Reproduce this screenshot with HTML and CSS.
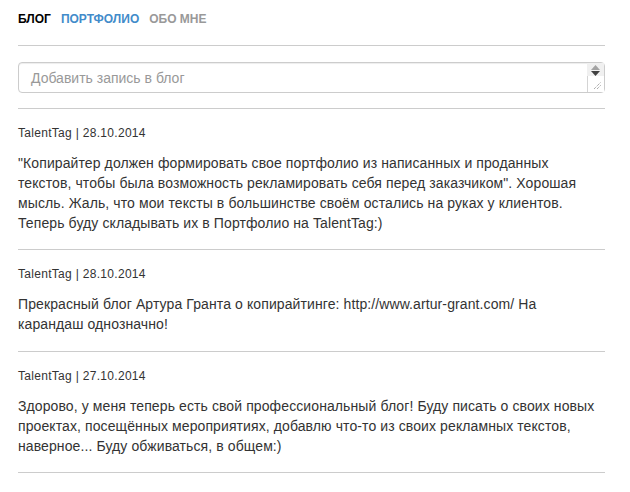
FILE: index.html
```html
<!DOCTYPE html>
<html lang="ru">
<head>
<meta charset="utf-8">
<title>Блог</title>
<link rel="stylesheet" href="styles.css">
</head>
<body>
<div class="page">
  <nav class="tabs">
    <a class="tab tab-active">БЛОГ</a>
    <a class="tab tab-link">ПОРТФОЛИО</a>
    <a class="tab tab-muted">ОБО МНЕ</a>
  </nav>
  <div class="composer">
    <div class="field">
      <span class="placeholder">Добавить запись в блог</span>
      <div class="scrollbar">
        <div class="sb-buttons">
          <svg class="arrow" width="9" height="5" viewBox="0 0 9 5"><path d="M0 5 L4.5 0 L9 5 Z" fill="#a3a3a3"/></svg>
          <svg class="arrow" width="9" height="5" viewBox="0 0 9 5"><path d="M0 0 L9 0 L4.5 5 Z" fill="#404040"/></svg>
        </div>
        <div class="sb-grip">
          <svg width="9" height="9" viewBox="0 0 9 9"><path d="M1 8 L8 1 M4 8 L8 4" stroke="#8a8a8a" stroke-width="1" stroke-dasharray="1 1" fill="none"/></svg>
        </div>
      </div>
    </div>
  </div>
  <article class="post">
    <div class="meta">TalentTag | 28.10.2014</div>
    <p class="text">"Копирайтер должен формировать свое портфолио из написанных и проданных текстов, чтобы была возможность рекламировать себя перед заказчиком". Хорошая мысль. Жаль, что мои тексты в большинстве своём остались на руках у клиентов. Теперь буду складывать их в Портфолио на TalentTag:)</p>
  </article>
  <article class="post">
    <div class="meta">TalentTag | 28.10.2014</div>
    <p class="text">Прекрасный блог Артура Гранта о копирайтинге: http://www.artur-grant.com/ На карандаш однозначно!</p>
  </article>
  <article class="post">
    <div class="meta">TalentTag | 27.10.2014</div>
    <p class="text">Здорово, у меня теперь есть свой профессиональный блог! Буду писать о своих новых проектах, посещённых мероприятиях, добавлю что-то из своих рекламных текстов, наверное... Буду обживаться, в общем:)</p>
  </article>
</div>
</body>
</html>
```
FILE: styles.css
```css
html, body {
  margin: 0;
  padding: 0;
  background: #ffffff;
}
body {
  font-family: "Liberation Sans", Arial, sans-serif;
  color: #333333;
  font-size: 14px;
}
.page {
  width: 587px;
  margin-left: 18px;
}
.tabs {
  display: flex;
  gap: 10px;
  padding: 11px 0 17px;
  border-bottom: 1px solid #cccccc;
}
.tab {
  font-size: 12px;
  font-weight: bold;
  line-height: 17px;
  text-decoration: none;
}
.tab-active { color: #000000; }
.tab-link { color: #428bca; }
.tab-muted { color: #999999; }
.composer {
  padding: 16px 0 15px;
  border-bottom: 1px solid #cccccc;
}
.field {
  position: relative;
  height: 29px;
  border: 1px solid #cccccc;
  border-radius: 4px;
  display: flex;
  align-items: center;
  padding-left: 12px;
  box-shadow: inset 0 1px 1px rgba(0,0,0,0.075);
}
.placeholder {
  color: #999999;
  font-size: 14px;
  line-height: 20px;
}
.scrollbar {
  position: absolute;
  top: 0;
  right: 0;
  bottom: 0;
  width: 17px;
  display: flex;
  flex-direction: column;
}
.sb-buttons {
  height: 12px;
  background: #f0f0f0;
  display: flex;
  flex-direction: column;
  align-items: center;
  justify-content: center;
  gap: 1px;
  padding-top: 1px;
}
.arrow { display: block; }
.sb-grip {
  flex: 1;
  border-left: 1px solid #d4d4d4;
  background: #ffffff;
  display: flex;
  align-items: flex-end;
  justify-content: flex-end;
  padding: 0 2px 2px 0;
}
.sb-grip svg { display: block; }
.post {
  padding: 16px 0 16px;
  border-bottom: 1px solid #cccccc;
}
.post:nth-of-type(2) {
  padding-bottom: 17px;
}
.meta {
  font-size: 12px;
  line-height: 17px;
  letter-spacing: 0.3px;
  margin-bottom: 11px;
}
.text {
  margin: 0;
  font-size: 14px;
  line-height: 20px;
  letter-spacing: 0.1px;
}
```
